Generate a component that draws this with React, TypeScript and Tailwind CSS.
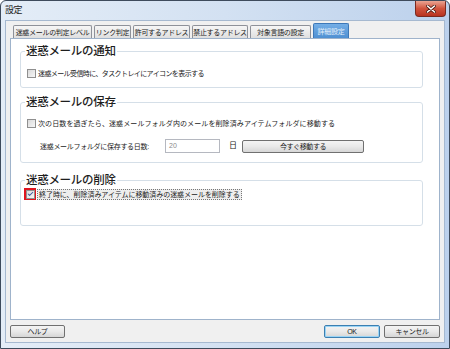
import { Check } from 'lucide-react';

function CheckBox({ checked }: { checked?: boolean }) {
    return (
        <span className="flex h-[9px] w-[9px] shrink-0 items-center justify-center border border-[#8f8f8f] bg-gradient-to-br from-[#d9d9d9] to-[#f7f7f7]">
            {checked && <Check className="h-[8px] w-[8px] text-[#3b5a9f]" strokeWidth={3.5} />}
        </span>
    );
}

function Button({ label, primary, className }: { label: string; primary?: boolean; className: string }) {
    return (
        <button
            className={`flex h-[13px] items-center justify-center rounded-[2px] border bg-gradient-to-b from-[#f4f4f4] via-[#e9e9e9] to-[#d6d6d6] text-[7px] leading-none tracking-[-0.4px] text-[#1a1a1a] ${
                primary ? 'border-[#3c7fb1] shadow-[inset_0_0_0_1px_#9ad4f5]' : 'border-[#707070]'
            } ${className}`}
        >
            {label}
        </button>
    );
}

const tabs = [
    { label: '迷惑メールの判定レベル', w: 'w-[79px]' },
    { label: 'リンク判定', w: 'w-[37px]' },
    { label: '許可するアドレス', w: 'w-[57px]' },
    { label: '禁止するアドレス', w: 'w-[56px]' },
    { label: '対象言語の設定', w: 'w-[61px]' },
];

export default function App() {
    return (
        <div className="flex h-[349px] w-[450px] flex-col overflow-hidden rounded-t-[6px] border border-[#3e4b5c] bg-gradient-to-r from-[#e4edf7] via-[#d3e1f2] to-[#bcd1ec] font-['Liberation_Sans','Noto_Sans_CJK_JP',sans-serif] text-[#1a1a1a]">
            {/* Title bar */}
            <div className="flex h-[19px] shrink-0 items-start justify-between pl-[4px] pr-[3px]">
                <span className="mt-[4px] text-[9px] leading-[10px] tracking-[-0.5px] text-[#1c1c1c]">設定</span>
                <div className="flex h-[16px] w-[31px] items-center justify-center rounded-b-[4px] border border-t-0 border-[#7a2a20] bg-gradient-to-b from-[#e9a493] via-[#d0533d] to-[#b8321f]">
                    <svg width="10" height="8" viewBox="0 0 10 8">
                        <path d="M1.5 1 L8.5 7 M8.5 1 L1.5 7" stroke="#4a1a12" strokeWidth="3" strokeLinecap="round" />
                        <path d="M1.5 1 L8.5 7 M8.5 1 L1.5 7" stroke="#ffffff" strokeWidth="1.6" strokeLinecap="round" />
                    </svg>
                </div>
            </div>

            {/* Client area */}
            <div className="mx-[4px] mb-[5px] flex flex-1 flex-col border border-[#a6b9d0] bg-[#f0f0f0] px-[4px]">
                {/* Tabs */}
                <div className="ml-[3px] flex h-[17px] shrink-0 items-end gap-[2px]">
                    {tabs.map((t) => (
                        <div
                            key={t.label}
                            className={`flex h-[13px] shrink-0 items-center justify-center whitespace-nowrap rounded-t-[2px] border border-b-0 border-[#8e9199] bg-gradient-to-b from-[#f6f6f6] to-[#dfdfdf] text-[7px] leading-none tracking-[-0.3px] ${t.w}`}
                        >
                            {t.label}
                        </div>
                    ))}
                    <div className="flex h-[15px] w-[36px] shrink-0 items-center justify-center whitespace-nowrap rounded-t-[2px] border border-b-0 border-[#3d78b8] bg-gradient-to-b from-[#74aee6] to-[#4f90d2] text-[7px] leading-none tracking-[-0.3px] text-[#e4effa]">
                        詳細設定
                    </div>
                </div>

                {/* Panel */}
                <div className="flex flex-1 flex-col border border-[#9fb3cb] bg-white pl-[9px] pr-[16px] pt-[6px]">
                    <fieldset className="rounded-[3px] border border-[#d5dfe8] px-[4px] pb-[9px] pt-[10px]">
                        <legend className="px-[1px] text-[11.5px] font-medium leading-[13px] tracking-[-0.3px] text-[#1e1e1e]">迷惑メールの通知</legend>
                        <div className="flex h-[10px] items-center gap-[2px] pl-[2px]">
                            <CheckBox />
                            <span className="text-[7px] leading-none tracking-[-0.6px]">迷惑メール受信時に、タスクトレイにアイコンを表示する</span>
                        </div>
                    </fieldset>

                    <fieldset className="mt-[8px] rounded-[3px] border border-[#d5dfe8] px-[4px] pb-[9px] pt-[9px]">
                        <legend className="px-[1px] text-[11.5px] font-medium leading-[13px] tracking-[-0.3px] text-[#1e1e1e]">迷惑メールの保存</legend>
                        <div className="flex h-[10px] items-center gap-[2px] pl-[2px]">
                            <CheckBox />
                            <span className="text-[7px] leading-none tracking-[0.1px]">
                                次の日数を過ぎたら、迷惑メールフォルダ内のメールを削除済みアイテムフォルダに移動する
                            </span>
                        </div>
                        <div className="mt-[11px] flex h-[14px] items-center pl-[15px]">
                            <span className="w-[125px] text-[7px] leading-none tracking-[-0.3px]">迷惑メールフォルダに保存する日数:</span>
                            <div className="flex h-[14px] w-[55px] items-center border border-[#b5b8c0] bg-white pl-[3px] text-[7px] text-[#8a8a8a]">20</div>
                            <span className="ml-[9px] w-[13px] text-[8px] leading-none">日</span>
                            <Button label="今すぐ移動する" className="w-[122px]" />
                        </div>
                    </fieldset>

                    <fieldset className="mt-[11px] rounded-[3px] border border-[#d5dfe8] pb-[25px] pl-[3px] pr-[4px] pt-[1px]">
                        <legend className="ml-[1px] px-[1px] text-[11.5px] font-medium leading-[13px] tracking-[-0.3px] text-[#1e1e1e]">迷惑メールの削除</legend>
                        <div className="flex h-[12px] items-center">
                            <span className="flex h-[12px] w-[12px] items-center justify-center border-2 border-[#e0141e]">
                                <CheckBox checked />
                            </span>
                            <span className="ml-[1px] flex h-[11px] items-center border border-dotted border-[#777] bg-[#eeeeee] px-[1px] text-[7px] leading-none tracking-[-0.05px]">
                                終了時に、削除済みアイテムに移動済みの迷惑メールを削除する
                            </span>
                        </div>
                    </fieldset>
                </div>

                {/* Bottom buttons */}
                <div className="flex shrink-0 items-center justify-between pb-[4px] pt-[5px]">
                    <Button label="ヘルプ" className="w-[55px]" />
                    <div className="flex gap-[4px]">
                        <Button label="OK" primary className="w-[56px]" />
                        <Button label="キャンセル" className="w-[56px]" />
                    </div>
                </div>
            </div>
        </div>
    );
}
